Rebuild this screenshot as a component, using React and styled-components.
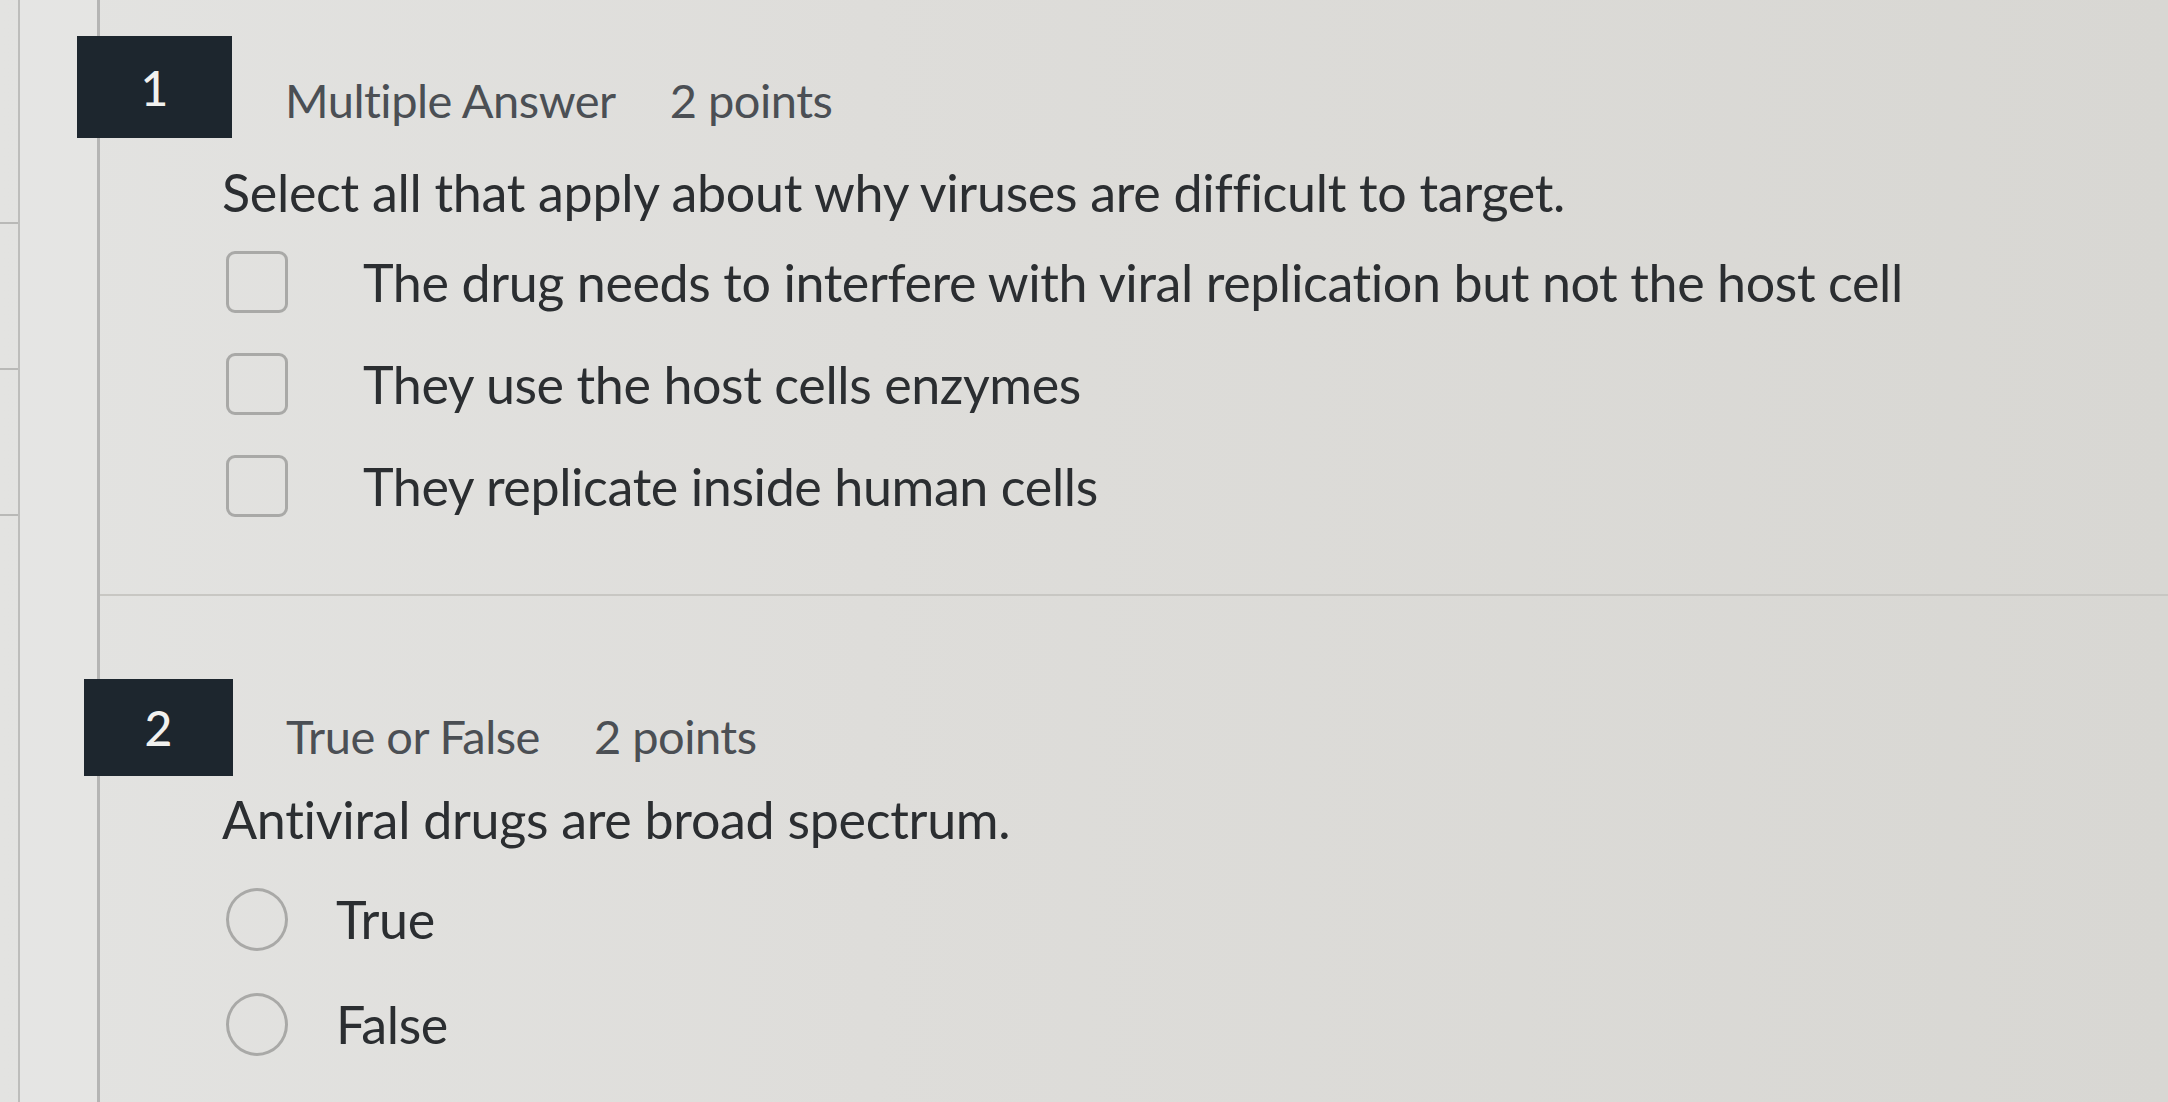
import React from 'react';
import styled, { createGlobalStyle } from 'styled-components';

const GlobalStyle = createGlobalStyle`
  html, body {
    margin: 0;
    padding: 0;
  }
  body {
    background: linear-gradient(90deg, #e3e3e1 0%, #dedddA 40%, #d8d7d3 100%);
    font-family: Lato, "Open Sans", "Liberation Sans", sans-serif;
    color: #2b2e31;
  }
`;

const Shell = styled.div`
  display: flex;
  min-height: 1102px;
  overflow: hidden;
`;

const OuterRail = styled.div`
  width: 18px;
  flex-shrink: 0;
  border-right: 2px solid #bdbdbb;
  display: flex;
  flex-direction: column;
  padding-top: 222px;
  gap: 144px;
`;

const Tick = styled.div`
  height: 2px;
  background: #b9b9b7;
`;

const InnerRail = styled.div`
  width: 77px;
  flex-shrink: 0;
  border-right: 3px solid #b5b5b4;
  background: rgba(255, 255, 255, 0.1);
`;

const Main = styled.main`
  flex: 1;
  display: flex;
  flex-direction: column;
`;

const Question = styled.section`
  padding-top: ${p => p.$top}px;
  padding-bottom: ${p => p.$bottom}px;
  border-bottom: ${p => (p.$divider ? '2px solid #c8c7c3' : 'none')};
`;

const Header = styled.div`
  display: flex;
  align-items: center;
  margin-left: ${p => p.$shift}px;
`;

const Badge = styled.div`
  width: ${p => p.$w}px;
  height: ${p => p.$h}px;
  background: #1d262e;
  color: #f1f1ef;
  display: flex;
  align-items: center;
  justify-content: center;
  font-size: 48px;
  font-weight: 500;
  flex-shrink: 0;
`;

const Meta = styled.div`
  display: flex;
  gap: 54px;
  margin-left: 53px;
  margin-top: ${p => p.$drop}px;
  font-size: 47px;
  color: #4b4f54;
  letter-spacing: -0.5px;
`;

const Body = styled.div`
  padding-left: 122px;
`;

const Prompt = styled.p`
  margin: ${p => p.$mt}px 0 0;
  font-size: 52px;
  line-height: 60px;
  letter-spacing: -0.3px;
`;

const Options = styled.div`
  display: flex;
  flex-direction: column;
  gap: ${p => p.$gap}px;
  margin-top: ${p => p.$mt}px;
`;

const Option = styled.label`
  display: flex;
  align-items: center;
  height: 64px;
  font-size: 52px;
  letter-spacing: -0.4px;
`;

const Box = styled.span`
  width: 62px;
  height: 62px;
  box-sizing: border-box;
  border: 3px solid #a9a9a7;
  border-radius: 9px;
  margin-left: 4px;
  margin-right: ${p => p.$gap}px;
  flex-shrink: 0;
`;

const Radio = styled(Box)`
  border-radius: 50%;
  height: 63px;
`;

export default function App() {
  const choices = [
    'The drug needs to interfere with viral replication but not the host cell',
    'They use the host cells enzymes',
    'They replicate inside human cells',
  ];

  return (
    <>
      <GlobalStyle />
      <Shell>
        <OuterRail>
          <Tick />
          <Tick />
          <Tick />
        </OuterRail>
        <InnerRail />
        <Main>
          <Question $top={36} $bottom={76} $divider>
            <Header $shift={-23}>
              <Badge $w={155} $h={102}>1</Badge>
              <Meta $drop={26}>
                <span>Multiple Answer</span>
                <span>2 points</span>
              </Meta>
            </Header>
            <Body>
              <Prompt $mt={24}>Select all that apply about why viruses are difficult to target.</Prompt>
              <Options $gap={38} $mt={28}>
                {choices.map(c => (
                  <Option key={c}>
                    <Box $gap={75} />
                    {c}
                  </Option>
                ))}
              </Options>
            </Body>
          </Question>

          <Question $top={83} $bottom={40}>
            <Header $shift={-16}>
              <Badge $w={149} $h={97}>2</Badge>
              <Meta $drop={16}>
                <span>True or False</span>
                <span>2 points</span>
              </Meta>
            </Header>
            <Body>
              <Prompt $mt={13}>Antiviral drugs are broad spectrum.</Prompt>
              <Options $gap={41} $mt={38}>
                {['True', 'False'].map(c => (
                  <Option key={c}>
                    <Radio $gap={48} />
                    {c}
                  </Option>
                ))}
              </Options>
            </Body>
          </Question>
        </Main>
      </Shell>
    </>
  );
}
